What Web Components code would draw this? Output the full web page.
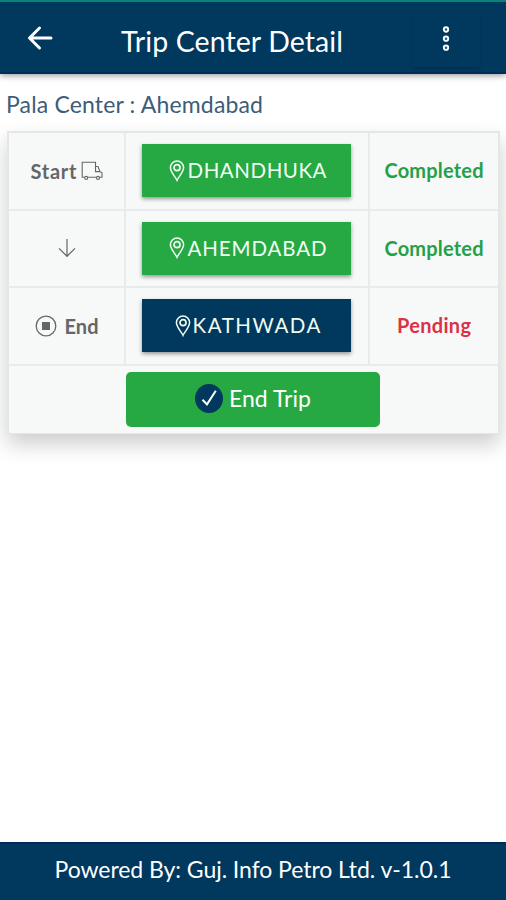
<!DOCTYPE html>
<html lang="en"><head><meta charset="utf-8"><title>Trip Center Detail</title>
<style>html,body{margin:0;height:100%;background:#fff;overflow:hidden;font-family:Lato,"Noto Sans",sans-serif}</style></head>
<body><trip-page></trip-page>
<script>
const define=(name,html,after)=>customElements.define(name,class extends HTMLElement{
  constructor(){super();this.attachShadow({mode:'open'}).innerHTML=html;}
  connectedCallback(){if(after)after(this);}
});

/* Text tracked so that it fills the given width */
define('fit-text',`<style>:host{display:block;white-space:nowrap;flex:none}span{display:inline-block}</style><span></span>`,el=>{
  const s=el.shadowRoot.querySelector('span'),w=+el.getAttribute('width');
  s.textContent=el.getAttribute('text');
  el.style.width=w+'px';
  s.style.letterSpacing=(w-s.getBoundingClientRect().width)/(s.textContent.length-1)+'px';
});

const icons={
  back:[26,26,'<path d="M24 13H3M12.500 3L2.500 13l10 10" fill="none" stroke="currentColor" stroke-width="3" stroke-linecap="round" stroke-linejoin="round"/>'],
  more:[8,28,'<g fill="#28557a" stroke="currentColor" stroke-width="1.900"><circle cx="4" cy="4.500" r="2.200"/><circle cx="4" cy="13.700" r="2.200"/><circle cx="4" cy="22.700" r="2.200"/></g>'],
  pin:[16,22,'<g fill="none" stroke="currentColor" stroke-width="1.500"><path d="M8 20.300C6.700 17 1.400 12.500 1.400 7.600a6.600 6.600 0 0 1 13.200 0C14.600 12.500 9.300 17 8 20.300Z"/><circle cx="8" cy="7.700" r="3" stroke-width="1.700"/></g>'],
  truck:[22,20,'<g fill="none" stroke="currentColor" stroke-width="1.100"><path d="M3.500 16.300H1.200V1.200h13.300v9.400h4.500M14.500 5.500h2.500l2 5.100 2 1.200v4.500h-2.300M7 16.300h8.500"/><circle cx="5.200" cy="16.900" r="1.500"/><circle cx="17" cy="16.900" r="1.500"/></g>'],
  down:[18,20,'<path d="M9 1v17.300M1 10.400l8 7.900 8-7.900" fill="none" stroke="currentColor" stroke-width="1.200"/>'],
  stop:[22,22,'<circle cx="11" cy="11" r="9.800" fill="none" stroke="currentColor" stroke-width="1.300"/><path d="M7 7h8v8H7z" fill="currentColor"/>'],
  check:[28,29,'<ellipse cx="14" cy="14.500" rx="14" ry="14.500" fill="#00385e"/><path d="M7.500 15.800l4.500 4.600 8.800-13.700" fill="none" stroke="#fff" stroke-width="2"/>']
};
define('ui-icon',`<style>:host{display:block;flex:none}svg{display:block}</style>`,el=>{
  const [w,h,d]=icons[el.getAttribute('name')];
  el.shadowRoot.innerHTML+=`<svg width="${w}" height="${h}" viewBox="0 0 ${w} ${h}">${d}</svg>`;
});

define('app-header',`<style>
:host{display:grid;grid-template-columns:122px 1fr 92px;height:74px;box-sizing:border-box;border-top:2px solid #078477;border-bottom:2px solid #002b5b;background:#00385e;color:#fff;box-shadow:0 1px 7px #0007;font-size:28.500px;line-height:34px;flex:none}
.back{padding:23px 0 0 27px}.title{padding-top:22px;margin-left:-1px}
.menu{margin:8px 0 5px;width:68px;justify-self:start;margin-left:-2px;box-shadow:0 3px 3px -1px #002d4b99;display:flex;justify-content:center;padding-top:15px;box-sizing:border-box}
</style><div class="back"><ui-icon name="back"></ui-icon></div><div class="title"><fit-text text="Trip Center Detail" width="222"></fit-text></div><div class="menu"><ui-icon name="more"></ui-icon></div>`);

define('place-button',`<style>
:host{display:flex;width:209px;height:53px;background:#26a842;color:#f0fdf3;box-shadow:0 2px 4px #0006;align-items:center;justify-content:center;gap:3px;font-size:20.500px;line-height:26px;box-sizing:border-box;padding:0 0 1px 2px}
:host([pending]){background:#00385e;gap:2px}
ui-icon{padding-top:1px}
</style><ui-icon name="pin"></ui-icon><slot></slot>`);

define('trip-row',`<style>
:host{display:grid;grid-template-columns:117px 244px 1fr;border-bottom:2px solid #e8ebec;color:#666;font-weight:700;font-size:20px;line-height:26px}
div{display:flex;align-items:center;justify-content:center;border-right:2px solid #e8ebec;box-sizing:border-box}
div:first-child,.status{padding-bottom:1px}
.place{font-weight:400;padding-right:1px}
.status{color:#26a047;border-right:0}:host([pending]) .status{color:#dc3148}
</style><div><slot name="stage"></slot></div><div class="place"><slot></slot></div><div class="status"><slot name="status"></slot></div>`);

define('end-button',`<style>
:host{display:flex;width:254px;height:55px;border-radius:5px;background:#26a842;color:#fff;align-items:center;justify-content:center;gap:6px;font-size:23px;line-height:28px;box-sizing:border-box;padding-bottom:2px}
fit-text{padding-bottom:1px}
</style><ui-icon name="check"></ui-icon><fit-text text="End Trip" width="82"></fit-text>`);

define('trip-card',`<style>
:host{display:grid;grid-template-rows:repeat(3,77.500px) 1fr;height:303px;margin:0 6px 0 7px;box-sizing:border-box;border:2px solid #e4e7e8;border-bottom-width:1px;border-right-width:2px;background:#f7f9f9;box-shadow:0 10px 20px #0003}
.foot{display:flex;justify-content:center;align-items:center;padding:1px 1px 0 0}
.stage{display:flex;align-items:center;gap:4px}.stop{gap:8px}
</style>
<trip-row><div class="stage" slot="stage"><fit-text text="Start" width="46"></fit-text><ui-icon name="truck"></ui-icon></div><place-button><fit-text text="DHANDHUKA" width="139"></fit-text></place-button><fit-text slot="status" text="Completed" width="99"></fit-text></trip-row>
<trip-row><ui-icon slot="stage" name="down"></ui-icon><place-button><fit-text text="AHEMDABAD" width="139"></fit-text></place-button><fit-text slot="status" text="Completed" width="99"></fit-text></trip-row>
<trip-row pending><div class="stage stop" slot="stage"><ui-icon name="stop"></ui-icon><fit-text text="End" width="34"></fit-text></div><place-button pending><fit-text text="KATHWADA" width="128"></fit-text></place-button><fit-text slot="status" text="Pending" width="74"></fit-text></trip-row>
<div class="foot"><end-button></end-button></div>`);

define('app-footer',`<style>
:host{display:flex;justify-content:center;height:58px;box-sizing:border-box;padding-top:11px;border-top:2px solid #002b5b;background:#00385e;color:#fff;font-size:23px;line-height:28px;flex:none}
</style><fit-text text="Powered By: Guj. Info Petro Ltd. v-1.0.1" width="397"></fit-text>`);

define('trip-page',`<style>
:host{display:flex;flex-direction:column;height:100vh}
.center{padding:16px 6px 0;height:57px;box-sizing:border-box;color:#3d5d78;font-size:23px;line-height:28px;flex:none}
main{flex:1}
</style><app-header></app-header><div class="center"><fit-text text="Pala Center : Ahemdabad" width="257"></fit-text></div><main><trip-card></trip-card></main><app-footer></app-footer>`);
</script></body></html>
